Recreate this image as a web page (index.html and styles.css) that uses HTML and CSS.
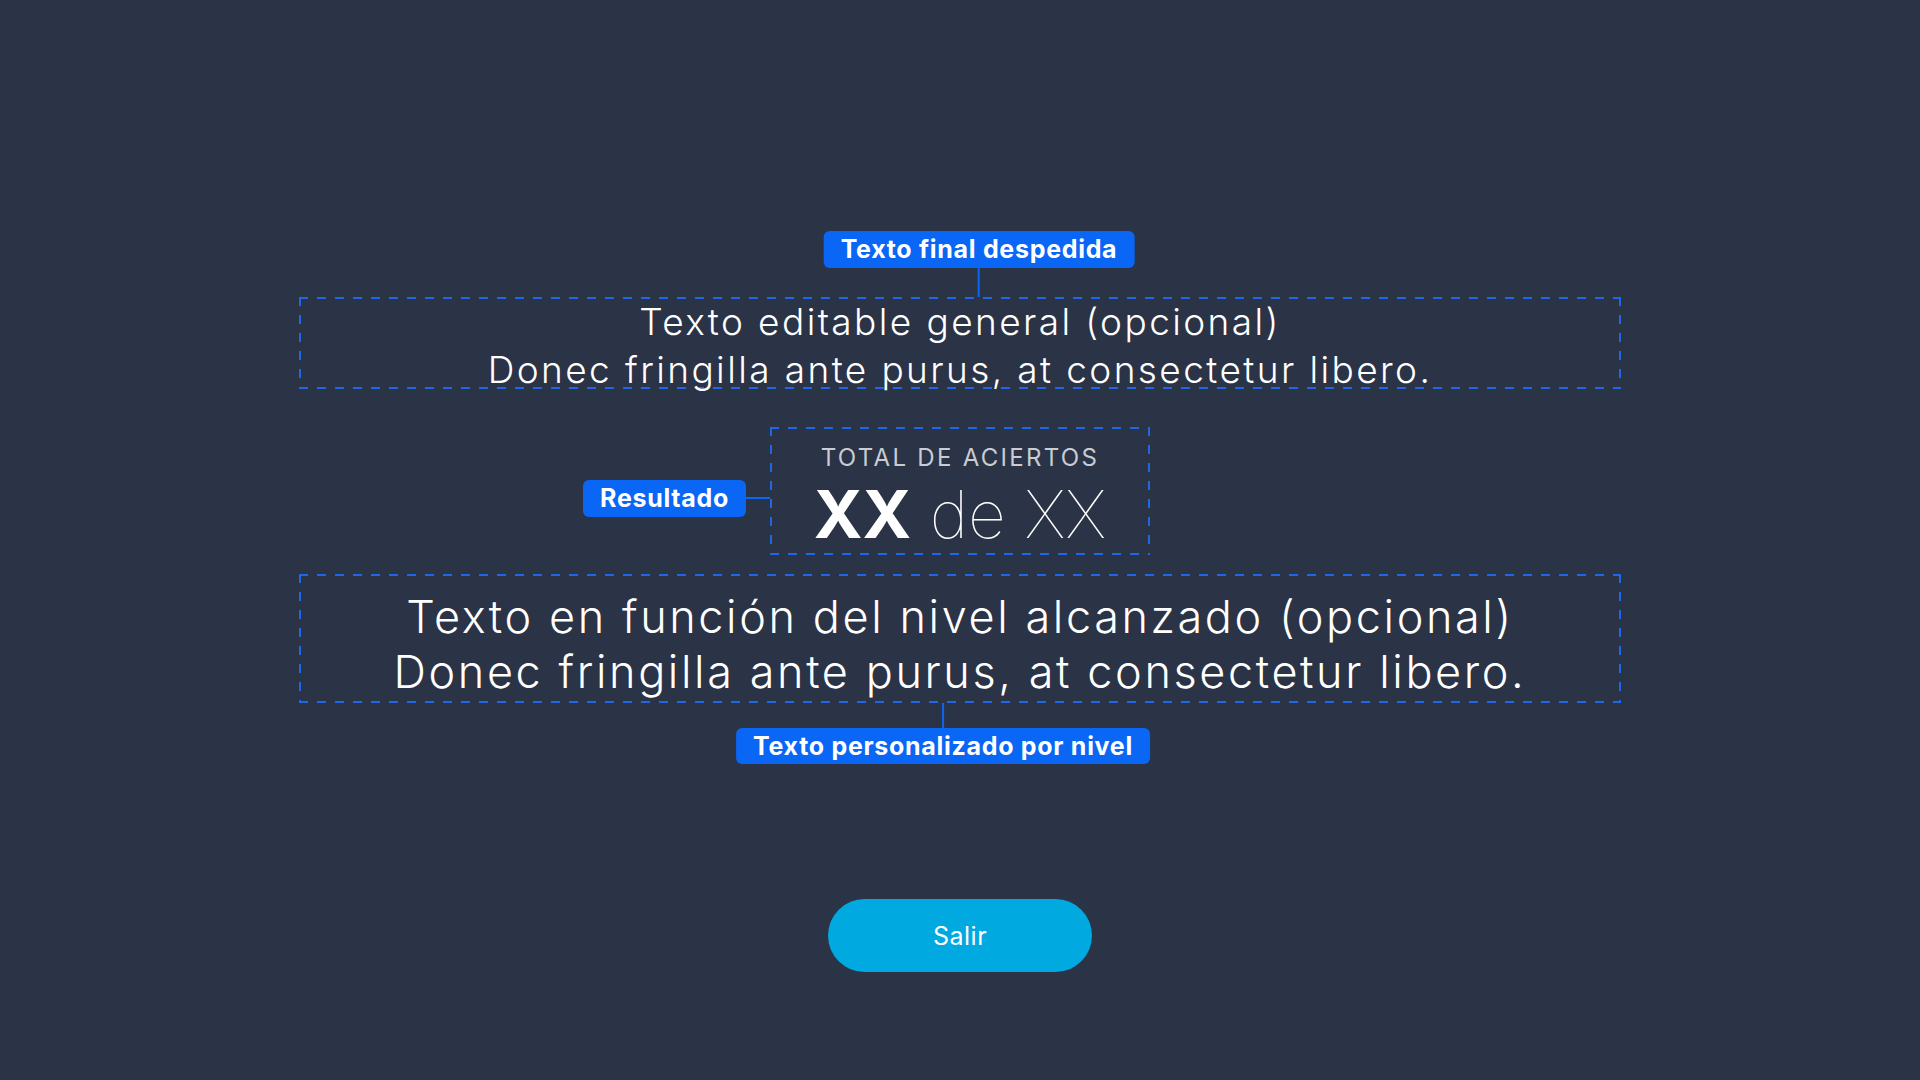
FILE: index.html
```html
<!DOCTYPE html>
<html lang="es">
<head>
<meta charset="utf-8">
<title>Resultado final</title>
<link rel="stylesheet" href="styles.css">
</head>
<body>
<main class="screen">
  <section class="zone zone-general">
    <span class="tag tag-top">Texto final despedida</span>
    <p class="copy copy-general">Texto editable general (opcional)<br>Donec fringilla ante purus, at consectetur libero.</p>
  </section>

  <section class="zone zone-score">
    <span class="tag tag-side">Resultado</span>
    <p class="score-title">TOTAL DE ACIERTOS</p>
    <p class="score-value"><strong>XX</strong> de XX</p>
  </section>

  <section class="zone zone-level">
    <p class="copy copy-level">Texto en función del nivel alcanzado (opcional)<br>Donec fringilla ante purus, at consectetur libero.</p>
    <span class="tag tag-bottom">Texto personalizado por nivel</span>
  </section>

  <button class="exit" type="button">Salir</button>
</main>
</body>
</html>
```

FILE: styles.css
```css
html, body {
  margin: 0;
  padding: 0;
}

body {
  width: 1920px;
  height: 1080px;
  background: #2b3346;
  color: #ffffff;
  font-family: "Inter", "Noto Sans", sans-serif;
  overflow: hidden;
}

.screen {
  display: flex;
  flex-direction: column;
  align-items: center;
  padding-top: 297px;
}

p {
  margin: 0;
}

/* dashed frame drawn with gradients: 9px dash, 9px gap, 2px stroke */
.zone {
  position: relative;
  box-sizing: border-box;
  text-align: center;
  --dash: #1f67e6;
  background:
    linear-gradient(90deg, var(--dash) 50%, transparent 50%) left top / 18px 2px repeat-x,
    linear-gradient(90deg, var(--dash) 50%, transparent 50%) left bottom / 18px 2px repeat-x,
    linear-gradient(180deg, var(--dash) 50%, transparent 50%) left top / 2px 18px repeat-y,
    linear-gradient(180deg, var(--dash) 50%, transparent 50%) right top / 2px 18px repeat-y;
}

.zone-general {
  width: 1322px;
  height: 92px;
}

.zone-score {
  width: 380px;
  height: 128px;
  margin-top: 38px;
  padding-top: 16px;
}

.zone-level {
  width: 1322px;
  height: 129px;
  margin-top: 19px;
}

.copy {
  font-weight: 300;
  white-space: nowrap;
}

.copy-general {
  font-size: 37px;
  line-height: 48px;
  letter-spacing: 2.4px;
  padding-top: 1px;
}

.copy-level {
  font-size: 45px;
  line-height: 55px;
  letter-spacing: 2.6px;
  padding-top: 15px;
}

.score-title {
  font-size: 24px;
  line-height: 30px;
  font-weight: 400;
  letter-spacing: 2.3px;
  color: #c9ccd3;
}

.score-value {
  font-size: 66px;
  line-height: 70px;
  font-weight: 100;
  margin-top: 6px;
}

.score-value strong {
  font-weight: 700;
}

/* annotation tags with their connector lines */
.tag {
  position: absolute;
  box-sizing: border-box;
  height: 37px;
  padding: 0 17px;
  border-radius: 6px;
  background: #0a66f5;
  color: #ffffff;
  font-family: "Inter", "Noto Sans", sans-serif;
  font-weight: 700;
  font-size: 25px;
  letter-spacing: 0.7px;
  line-height: 37px;
  white-space: nowrap;
}

.tag::after {
  content: "";
  position: absolute;
  background: #0a66f5;
}

.tag-top {
  bottom: calc(100% + 29px);
  left: calc(50% + 19px);
  transform: translateX(-50%);
}

.tag-top::after {
  width: 2px;
  height: 29px;
  top: 100%;
  left: calc(50% - 1px);
}

.tag-bottom {
  top: calc(100% + 25px);
  left: calc(50% - 17px);
  transform: translateX(-50%);
  height: 36px;
  line-height: 36px;
}

.tag-bottom::after {
  width: 2px;
  height: 25px;
  bottom: 100%;
  left: calc(50% - 1px);
}

.tag-side {
  right: calc(100% + 24px);
  top: 53px;
}

.tag-side::after {
  height: 2px;
  width: 24px;
  left: 100%;
  top: 17px;
}

.exit {
  margin-top: 196px;
  width: 264px;
  height: 73px;
  border: none;
  border-radius: 37px;
  background: #00a9df;
  color: #ffffff;
  font-family: "Inter", "Noto Sans", sans-serif;
  font-size: 25px;
  font-weight: 400;
  letter-spacing: 0.5px;
  cursor: pointer;
}
```
